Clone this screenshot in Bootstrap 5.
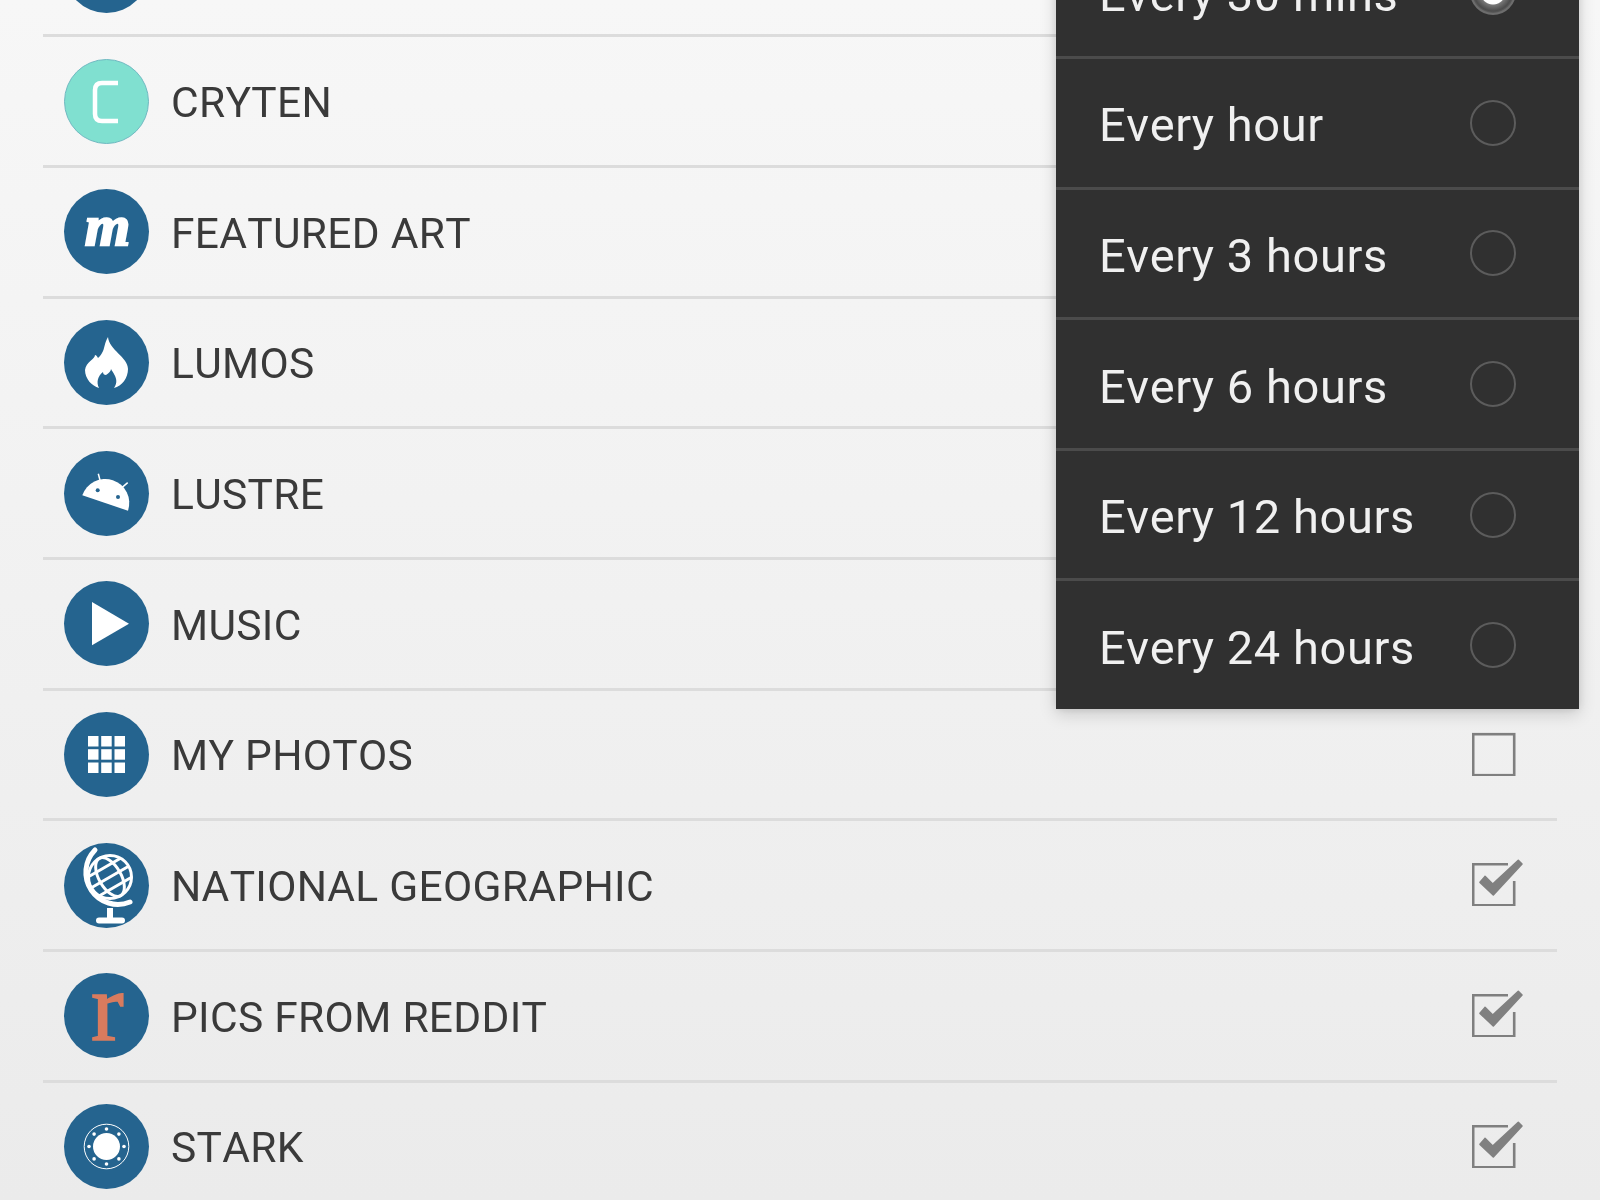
<!DOCTYPE html>
<html lang="en">
<head>
  <meta charset="UTF-8" />
  <meta name="viewport" content="width=device-width, initial-scale=1.0"/>
  <title>Sources</title>
  <link href="https://cdn.jsdelivr.net/npm/bootstrap@5.3.0/dist/css/bootstrap.min.css" rel="stylesheet">
  <style>
    html, body { height: 100%; overflow: hidden; }
    body { background: linear-gradient(180deg, #f7f7f7 0%, #ebebeb 100%); font-family: Roboto, "Liberation Sans", sans-serif; font-kerning: none; }
    .screen { height: 1200px; overflow: hidden; position: relative; filter: blur(.55px); }
    .source-list { margin: -93.2px 43px 0; --bs-list-group-bg: transparent; }
    .source-row { height: 130.67px; padding: 0 42px 0 21px; border-bottom: 3px solid #dcdcdc !important; background: transparent; }
    .source-row svg.disc { width: 85px; height: 85px; flex: none; overflow: visible; }
    .source-name { font-size: 42.5px; letter-spacing: .3px; line-height: 1; color: #3a3a3a; margin-left: 22px; padding-top: 4px; }
    .tick { width: 52px; height: 47px; margin-right: -9px; margin-top: -5px; flex: none; }
    .disc-bg { fill: #25648f; }
    .ink { fill: #fff; }
    .line { fill: none; stroke: #fff; stroke-width: 3; }
    .letter-m { font-family: "Liberation Serif", serif; font-weight: 700; font-style: italic; font-size: 58px; fill: #fff; stroke: #fff; stroke-width: 2.4; }
    .letter-r { font-family: "Liberation Serif", serif; font-size: 98px; fill: #d97b5e; stroke: #d97b5e; stroke-width: 1.6; }
    .freq-dialog { position: absolute; top: -71.8px; left: 1056px; width: 523px; background: #303030; box-shadow: 0 5px 16px rgba(0,0,0,.16), 0 0 8px rgba(0,0,0,.1); }
    .freq-row { height: 130.67px; padding: 0 63px 0 43px; border-bottom: 3px solid #4b4b4b; color: #f0f0f0; font-size: 47px; letter-spacing: .6px; }
    .freq-row:last-child { height: 127.67px; border-bottom: 0; }
    .freq-row > span:first-child { padding-top: 6px; }
    .ring { width: 46px; height: 46px; border-radius: 50%; border: 2px solid #5c5c5c; flex: none; }
    .ring-on { border-color: #6d6d6d; background: radial-gradient(circle, #fff 0 12px, #777 13px, #4c4c4c 19px, #666 22px); }
  </style>
</head>
<body>
  <svg width="0" height="0" class="d-block">
    <symbol id="box-off" viewBox="0 0 52 47"><rect x="1.2" y="5.2" width="41" height="41" fill="none" stroke="#7f7f7f" stroke-width="2.6"/></symbol>
    <symbol id="box-on" viewBox="0 0 52 47">
      <path d="M36 5.2H1.2V46.2H42.2V22" fill="none" stroke="#7f7f7f" stroke-width="2.6"/>
      <path d="M8 23.3L21.3 36L50 5L46.3 1.4L20.7 25L13 17.4Z" fill="#808080" stroke="#808080" stroke-width="1.6" stroke-linejoin="round"/>
    </symbol>
  </svg>

  <div class="screen">
    <div class="list-group list-group-flush source-list">
      <div class="list-group-item d-flex align-items-center source-row">
        <svg class="disc" viewBox="0 0 85 85"><circle class="disc-bg" cx="42.5" cy="42.5" r="42.5"/></svg>
      </div>
      <div class="list-group-item d-flex align-items-center source-row">
        <svg class="disc" viewBox="0 0 85 85"><circle cx="42.5" cy="42.5" r="42" fill="#80e0d0" stroke="#6fb8c0"/><path d="M54 24H38Q31 24 31 31V55Q31 62 38 62H54" fill="none" stroke="#fff" stroke-width="4.5"/></svg>
        <span class="source-name">CRYTEN</span>
      </div>
      <div class="list-group-item d-flex align-items-center source-row">
        <svg class="disc" viewBox="0 0 85 85"><circle class="disc-bg" cx="42.5" cy="42.5" r="42.5"/><text class="letter-m" x="21" y="56">m</text></svg>
        <span class="source-name">FEATURED ART</span>
      </div>
      <div class="list-group-item d-flex align-items-center source-row">
        <svg class="disc" viewBox="0 0 85 85"><circle class="disc-bg" cx="42.5" cy="42.5" r="42.5"/><path class="ink" d="M44 17C40 24 41 28 38 33C37 35 36 36 34 38C33 36 32 35 31 35C31 39 22 42 21 50C21 59 28 66 35 68C32 62 34 56 39 52C39 54 40 55 42 55C45 53 47 51 47 49C49 53 56 60 50 68C58 66 64 58 64 49C64 37 45 30 44 17Z"/></svg>
        <span class="source-name">LUMOS</span>
      </div>
      <div class="list-group-item d-flex align-items-center source-row">
        <svg class="disc" viewBox="0 0 85 85"><circle class="disc-bg" cx="42.5" cy="42.5" r="42.5"/><path class="ink" d="M18.3 44.3A24.1 24.1 0 0 1 64 59.7Z"/><path d="M34.3 22.7L36.7 31.7M63.7 31.7L57 37.3" stroke="#fff" stroke-width="1.5"/><circle class="disc-bg" cx="33.7" cy="39.3" r="2"/><circle class="disc-bg" cx="54" cy="46" r="2"/></svg>
        <span class="source-name">LUSTRE</span>
      </div>
      <div class="list-group-item d-flex align-items-center source-row">
        <svg class="disc" viewBox="0 0 85 85"><circle class="disc-bg" cx="42.5" cy="42.5" r="42.5"/><polygon class="ink" points="28,21 65,42.7 28,64.3"/></svg>
        <span class="source-name">MUSIC</span>
      </div>
      <div class="list-group-item d-flex align-items-center source-row">
        <svg class="disc" viewBox="0 0 85 85"><circle class="disc-bg" cx="42.5" cy="42.5" r="42.5"/>
          <g class="ink">
            <rect x="24" y="24" width="10.5" height="10.5"/><rect x="37.2" y="24" width="10.5" height="10.5"/><rect x="50.5" y="24" width="10.5" height="10.5"/>
            <rect x="24" y="37.2" width="10.5" height="10.5"/><rect x="37.2" y="37.2" width="10.5" height="10.5"/><rect x="50.5" y="37.2" width="10.5" height="10.5"/>
            <rect x="24" y="50.5" width="10.5" height="10.5"/><rect x="37.2" y="50.5" width="10.5" height="10.5"/><rect x="50.5" y="50.5" width="10.5" height="10.5"/>
          </g>
        </svg>
        <span class="source-name">MY PHOTOS</span>
        <svg class="tick ms-auto"><use href="#box-off"/></svg>
      </div>
      <div class="list-group-item d-flex align-items-center source-row">
        <svg class="disc" viewBox="0 0 85 85"><circle class="disc-bg" cx="42.5" cy="42.5" r="42.5"/>
          <path d="M31 7A32 32 0 0 0 66 59" fill="none" stroke="#fff" stroke-width="5" stroke-linecap="round"/>
          <path d="M46 65V76" stroke="#fff" stroke-width="6"/>
          <path d="M35 77.5H58" stroke="#fff" stroke-width="6" stroke-linecap="round"/>
          <circle class="line" cx="46" cy="34" r="21.5"/>
          <g class="line" transform="rotate(-30 46 34)">
            <ellipse cx="46" cy="34" rx="11" ry="21.5"/>
            <path d="M27 23H65M25 34H67M27 45H65"/>
          </g>
        </svg>
        <span class="source-name">NATIONAL GEOGRAPHIC</span>
        <svg class="tick ms-auto"><use href="#box-on"/></svg>
      </div>
      <div class="list-group-item d-flex align-items-center source-row">
        <svg class="disc" viewBox="0 0 85 85"><circle class="disc-bg" cx="42.5" cy="42.5" r="42.5"/><text class="letter-r" x="27" y="67">r</text></svg>
        <span class="source-name">PICS FROM REDDIT</span>
        <svg class="tick ms-auto"><use href="#box-on"/></svg>
      </div>
      <div class="list-group-item d-flex align-items-center source-row">
        <svg class="disc" viewBox="0 0 85 85"><circle class="disc-bg" cx="42.5" cy="42.5" r="42.5"/>
          <circle cx="42.5" cy="42.5" r="22.3" fill="none" stroke="#fff" stroke-width="1"/>
          <circle class="ink" cx="42.5" cy="42.5" r="13.5"/>
          <g class="ink">
            <circle cx="42.5" cy="25" r="1.8"/><circle cx="54.9" cy="30.1" r="1.8"/><circle cx="60" cy="42.5" r="1.8"/><circle cx="54.9" cy="54.9" r="1.8"/>
            <circle cx="42.5" cy="60" r="1.8"/><circle cx="30.1" cy="54.9" r="1.8"/><circle cx="25" cy="42.5" r="1.8"/><circle cx="30.1" cy="30.1" r="1.8"/>
          </g>
        </svg>
        <span class="source-name">STARK</span>
        <svg class="tick ms-auto"><use href="#box-on"/></svg>
      </div>
    </div>

    <div class="freq-dialog">
      <div class="freq-row d-flex align-items-center justify-content-between"><span>Every 30 mins</span><span class="ring ring-on"></span></div>
      <div class="freq-row d-flex align-items-center justify-content-between"><span>Every hour</span><span class="ring"></span></div>
      <div class="freq-row d-flex align-items-center justify-content-between"><span>Every 3 hours</span><span class="ring"></span></div>
      <div class="freq-row d-flex align-items-center justify-content-between"><span>Every 6 hours</span><span class="ring"></span></div>
      <div class="freq-row d-flex align-items-center justify-content-between"><span>Every 12 hours</span><span class="ring"></span></div>
      <div class="freq-row d-flex align-items-center justify-content-between"><span>Every 24 hours</span><span class="ring"></span></div>
    </div>
  </div>

  <script src="https://cdn.jsdelivr.net/npm/bootstrap@5.3.0/dist/js/bootstrap.bundle.min.js"></script>
</body>
</html>
